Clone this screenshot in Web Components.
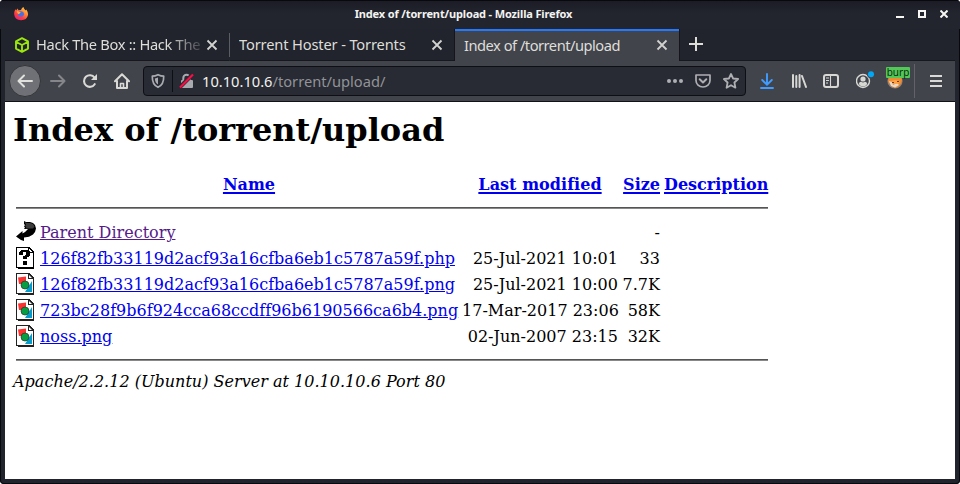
<!DOCTYPE html>
<html lang="en"><head><meta charset="utf-8"><title>Index of /torrent/upload</title>
<style>html,body{margin:0;width:960px;height:484px;overflow:hidden;background:#fff}</style></head>
<body><browser-window></browser-window>
<script>
const define=(name,html)=>customElements.define(name,class extends HTMLElement{
  constructor(){super();const t=document.createElement('template');t.innerHTML=html;this.attachShadow({mode:'open'}).append(t.content.cloneNode(true));}
});
const icons={
firefox:`<svg width="16" height="16" viewBox="0 0 16 16"><defs><linearGradient id="f" x1="1" y1="0" x2=".3" y2="1"><stop stop-color="#ffe04d"/><stop offset=".4" stop-color="#ff9136"/><stop offset=".75" stop-color="#ff3b47"/><stop offset="1" stop-color="#e22870"/></linearGradient></defs><path fill="url(#f)" d="M1.2 8.5C1 6.400 1.700 4.500 2.600 3.300L3.200 4.500L4.500 2.600L5.500 4.200L8 4C8.500 2.500 9.300 1.500 10.500 1C10.600 2.600 12 3.400 12.600 4.500L13.200 3.500C14.500 5 15.200 7 15 9A7 6.500 0 0 1 1.200 8.500Z"/><path fill="#4b6ee0" d="M5.300 6.200Q8 4 10.600 6.500Q11.800 9.500 9 10.800Q5.500 11.200 4.600 8.500L6.500 7.500Z"/><path fill="#ffb13b" d="M3.700 5L6 5.700L7.800 6.300L6.600 7.400L5.700 8.300Q4.200 7.500 3.700 5Z"/></svg>`,
box:`<svg width="16" height="16" viewBox="0 0 16 16" fill="none" stroke="#9be60b" stroke-width="1.9" stroke-linejoin="round"><path d="M8 1.200L14 4.400V11.600L8 14.900L2 11.600V4.400ZM2.300 5L8 8L13.700 5M8 8V14.500"/></svg>`,
close:`<svg width="12" height="12" viewBox="0 0 12 12"><path d="M1.500 1.500L10.500 10.500M10.500 1.500L1.500 10.500" stroke="#d2d2cf" stroke-width="1.8"/></svg>`,
plus:`<svg width="14" height="14" viewBox="0 0 14 14"><path d="M7 0V14M0 7H14" stroke="#deded9" stroke-width="2"/></svg>`,
back:`<svg width="16" height="16" viewBox="0 0 16 16" fill="none" stroke="#e0e0dc" stroke-width="2" stroke-linecap="round" stroke-linejoin="round"><path d="M15 8H1.500M7 2.500L1.500 8L7 13.500"/></svg>`,
forward:`<svg width="16" height="16" viewBox="0 0 16 16" fill="none" stroke="#85868a" stroke-width="2" stroke-linecap="round" stroke-linejoin="round"><path d="M1 8H14.500M9 2.500L14.500 8L9 13.500"/></svg>`,
reload:`<svg width="16" height="16" viewBox="0 0 16 16"><path d="M12.500 4.600A5.800 5.800 0 1 0 12.700 11.200" fill="none" stroke="#d9d9d5" stroke-width="2.100" stroke-linecap="round"/><path d="M15 1V7H9Z" fill="#d9d9d5"/></svg>`,
home:`<svg width="16" height="16" viewBox="0 0 16 16" fill="none" stroke="#d9d9d5" stroke-width="2" stroke-linejoin="round" stroke-linecap="round"><path d="M1 8.300L8 1.300L15 8.300M3 8V15H13V8"/><path d="M6.500 15V10.500H9.500V15" stroke-width="1.600"/></svg>`,
shield:`<svg width="14" height="16" viewBox="0 0 14 16"><path d="M7 1.700Q10 3.200 12.700 3.200Q13 11.500 7 14.300Q1 11.500 1.300 3.200Q4 3.200 7 1.700Z" fill="none" stroke="#aaabb0" stroke-width="1.700" stroke-linejoin="round"/><path d="M7 4.500V11.600Q4 9.600 3.900 5.400Q5.800 5.200 7 4.500Z" fill="#aaabb0"/></svg>`,
lock:`<svg width="16" height="16" viewBox="0 0 16 16"><path d="M4.300 7V5A3.200 3.200 0 0 1 10.700 5V8" fill="none" stroke="#a9aab0" stroke-width="2"/><rect x="2" y="7" width="12" height="8" rx="1" fill="#a9aab0"/><path d="M.5 14.500L13.500 1.500" stroke="#292a35" stroke-width="4"/><path d="M1 14.500L14 1.500" stroke="#ff0b43" stroke-width="2.100"/></svg>`,
dots:`<svg width="16" height="4" viewBox="0 0 16 4" fill="#aeafb3"><circle cx="2" cy="2" r="2"/><circle cx="8" cy="2" r="2"/><circle cx="14" cy="2" r="2"/></svg>`,
pocket:`<svg width="16" height="16" viewBox="0 0 16 16" fill="none" stroke="#aeafb3" stroke-linejoin="round" stroke-linecap="round"><path stroke-width="1.700" d="M1 2H15V7.500A7 6.500 0 0 1 1 7.500Z"/><path stroke-width="2" d="M4.700 6.300L8 9.500L11.300 6.300"/></svg>`,
star:`<svg width="16" height="16" viewBox="0 0 16 16"><path d="M8 1L10.100 5.500L15.100 6L11.400 9.500L12.400 14.700L8 12.200L3.600 14.700L4.600 9.500L.9 6L5.900 5.500Z" fill="none" stroke="#aeafb3" stroke-width="1.800" stroke-linejoin="round"/></svg>`,
download:`<svg width="14" height="16" viewBox="0 0 14 16" fill="none" stroke="#409cff" stroke-width="1.900" stroke-linecap="round"><path d="M7 1V11.500M2.200 7L7 11.700L11.800 7M1 15H13"/></svg>`,
library:`<svg width="16" height="16" viewBox="0 0 16 16" stroke="#d7d7d3" stroke-width="2" stroke-linecap="round"><path d="M2 2V14M5.300 3V14M8.600 2V14M11 3L15 14"/></svg>`,
sidebar:`<svg width="16" height="14" viewBox="0 0 16 14"><rect x="1" y="1" width="14" height="12" rx="2" fill="none" stroke="#d7d7d3" stroke-width="2"/><path d="M7.500 1V13M3 4H6M3 6.500H6M3 9H5" stroke="#d7d7d3" stroke-width="1.100"/></svg>`,
account:`<svg width="20" height="18" viewBox="0 0 20 18"><circle cx="7" cy="10" r="6.500" fill="none" stroke="#d7d7d3" stroke-width="1.400"/><circle cx="7" cy="8" r="2.600" fill="#d7d7d3"/><path d="M2.700 13Q3.300 10.800 5 10.800Q7 12.300 9 10.800Q10.700 10.800 11.300 13Q9.500 15.500 7 15.500Q4.500 15.500 2.700 13Z" fill="#d7d7d3"/><circle cx="15" cy="3.200" r="4" fill="#42444c"/><circle cx="15" cy="3.200" r="3" fill="#00a8f5"/></svg>`,
fox:`<svg width="16" height="16" viewBox="0 0 16 16"><circle cx="8" cy="8" r="7.600" fill="#9b8171"/><path d="M1 8Q2 2 8 2Q14 2 15 7Q14 13 8.500 15Q3 13 1 8Z" fill="#f08b30"/><path d="M2 8L5 9L6 12L10 10L12 12L8 14.500L4 13Z" fill="#e9d8c9"/><path d="M4 8L8 7L13 8L11 11L7 11Z" fill="#ffa348"/><path d="M5 9.500H7M10 8.500H12" stroke="#6b3a1b"/></svg>`,
menu:`<svg width="12" height="12" viewBox="0 0 12 12" stroke="#d9d9d5" stroke-width="2"><path d="M0 1H12M0 6H12M0 11H12"/></svg>`,
parent:`<svg width="20" height="22" viewBox="0 0 20 22"><path d="M8 0L10 1H14L17 2L19 4L20 7.500L19 11L17 13.500L13 15.800L8 16.500V20L5 19L0 15.500L6.500 10V12.500L9 11L12 8H8L9 6.500L8 5.500L9 4L8 3Z" fill="#000"/><path d="M8.500 1L11 2H14L17 3L18.500 5.500L17 7.500H9.500L10.500 6L9 5L10 3.500Z" fill="#3c3c3c"/></svg>`,
unknown:`<svg width="20" height="22" viewBox="0 0 20 22" shape-rendering="crispEdges"><path d="M0 0H13L18 5V22H2V21H0Z" fill="#000"/><path d="M1 1H12V6H17V20H1Z" fill="#fff"/><path d="M13 2L16 5H13Z" fill="#fff"/><path d="M4 4H5V3H12V4H14V9H13V10H11V12H7V9H9V8H10V5H7V8H3V5H4ZM7 14H11V18H7Z" fill="#000"/></svg>`,
image:`<svg width="20" height="22" viewBox="0 0 20 22"><path shape-rendering="crispEdges" d="M0 0H13L18 5V22H2V21H0Z" fill="#222"/><path shape-rendering="crispEdges" d="M1 1H12V6H17V20H1Z" fill="#fff"/><path d="M13 2L16 5H13Z" fill="#fff"/><path d="M2 4.500L10 3.500V11H3Z" fill="#ff3030"/><path d="M16 8V19H9Z" fill="#079bcc"/><circle cx="9" cy="12" r="4" fill="#079d42" stroke="#173c29" stroke-width=".7"/></svg>`};
customElements.define('ui-icon',class extends HTMLElement{connectedCallback(){if(!this.shadowRoot)this.attachShadow({mode:'open'}).innerHTML='<style>:host,svg{display:block;flex:none}</style>'+icons[this.getAttribute('name')];}});
define('window-title',`<style>:host{display:grid;grid-template-columns:100px 1fr 134px;align-items:center;height:29px;box-sizing:border-box;border-top:1px solid #08090d;background:linear-gradient(#1b1c25,#23252e 12px);color:#f3f3f1;font:bold 11px "Noto Sans",sans-serif;padding:0 12px 0 13px}.t{text-align:center;letter-spacing:-.14px;padding-bottom:3px}.w{display:flex;gap:14px;justify-content:flex-end;padding-bottom:3px}ui-icon{margin-top:-2px}</style><ui-icon name="firefox"></ui-icon><span class="t"><slot></slot></span><div class="w"><svg width="8" height="8"><path d="M0 7H8" stroke="#f6f6f3" stroke-width="2"/></svg><svg width="8" height="8"><path d="M1 1H7V7H1Z" fill="none" stroke="#f6f6f3" stroke-width="2"/></svg><svg width="8" height="8"><path d="M.5 .5L7.500 7.500M7.500 .5L.5 7.500" stroke="#f6f6f3" stroke-width="2"/></svg></div>`);
define('browser-tab',`<style>:host{display:flex;align-items:center;box-sizing:border-box;width:225px;height:32px;padding:0 11px 0 9px;color:#deded9;font:14.67px "Noto Sans",sans-serif;white-space:nowrap;border-bottom:1px solid #17181e}.t{flex:1;overflow:hidden;letter-spacing:var(--ls,0);padding-bottom:1px}:host([fade]) .t{-webkit-mask-image:linear-gradient(90deg,#000 80%,#0003 100%);margin-right:6px}:host([active]){background:#42444c;border-top:2px solid #2379ff;border-bottom:0;padding-bottom:2px}</style><slot name="icon"></slot><span class="t"><slot></slot></span><ui-icon name="close"></ui-icon>`);
define('tab-strip',`<style>:host{display:flex;height:32px;background:#22242d;margin:0 5px}.sep{box-sizing:border-box;width:1px;height:24px;margin-top:4px;background:#5b5d64}browser-tab{width:224px}.one{--ls:-.31px}.two{--ls:-.15px}.three{--ls:-.49px}.one ui-icon{margin-right:6px}.edge{width:1px;background:#15161d}.new{flex:1;border-bottom:1px solid #17181e;padding:8px 0 0 9px;box-sizing:border-box}</style><browser-tab class="one" fade><ui-icon slot="icon" name="box"></ui-icon>Hack The Box :: Hack The</browser-tab><div class="sep"></div><browser-tab class="two">Torrent Hoster - Torrents</browser-tab><div class="edge"></div><browser-tab active class="three">Index of /torrent/upload</browser-tab><div class="edge"></div><div class="new"><ui-icon name="plus"></ui-icon></div>`);
define('url-bar',`<style>:host{display:flex;align-items:center;box-sizing:border-box;width:603px;height:30px;border:1px solid #0e0f15;border-radius:4px;background:#282a34;padding:0 6px 0 7px;color:#f2f2ee;font:14.67px "Noto Sans",sans-serif}.sep{height:22px;width:1px;background:#0e0f15;margin:0 6px 0 7px}.url{flex:1;margin-left:7px}.url i{font-style:normal;color:#929397}.end{display:flex;align-items:center;gap:12px}</style><ui-icon name="shield"></ui-icon><div class="sep"></div><ui-icon name="lock"></ui-icon><span class="url">10.10.10.6<i>/torrent/upload/</i></span><div class="end"><ui-icon name="dots"></ui-icon><ui-icon name="pocket"></ui-icon><ui-icon name="star"></ui-icon></div>`);
define('tool-bar',`<style>:host{display:flex;align-items:center;box-sizing:border-box;margin:0 5px;height:41px;background:#42444c;border-bottom:1px solid #101116;padding-left:4px}.back{display:grid;place-items:center;box-sizing:border-box;width:32px;height:32px;border:1px solid #343538;border-radius:50%;background:#707177;margin-right:9px}.r{margin:0 16px 0 16px}url-bar{margin-left:13px}.tools{display:flex;align-items:center;margin-left:14px}.burp{position:relative;margin-left:11px}.burp b{position:absolute;left:-1px;top:-6px;width:24px;height:11px;font:10px/10px "Noto Sans",sans-serif;text-align:center;color:#102b12;background:#52c957;border-radius:1px}.line{width:1px;height:34px;background:#626369;margin:0 15px 0 11px}</style><div class="back"><ui-icon name="back"></ui-icon></div><ui-icon name="forward"></ui-icon><ui-icon class="r" name="reload"></ui-icon><ui-icon name="home"></ui-icon><url-bar></url-bar><div class="tools"><ui-icon name="download"></ui-icon><ui-icon name="library" style="margin-left:17px"></ui-icon><ui-icon name="sidebar" style="margin-left:16px"></ui-icon><ui-icon name="account" style="margin:-2px 0 0 17px"></ui-icon><div class="burp"><ui-icon name="fox"></ui-icon><b>burp</b></div><div class="line"></div><ui-icon name="menu"></ui-icon></div>`);
const grid=`grid-template-columns:20px 418px 156px 38px 104px;column-gap:4px;`;
customElements.define('file-row',class extends HTMLElement{connectedCallback(){const a=n=>this.getAttribute(n)||'';this.attachShadow({mode:'open'}).innerHTML=`<style>:host{display:grid;${grid}height:26px;line-height:20px;align-items:center;white-space:nowrap;letter-spacing:.01px}.r{text-align:right}ui-icon{margin-top:-2px}a{color:#0000ee;text-decoration:underline}:host([visited]) a{color:#551a8b}</style><ui-icon name="${a('icon')}"></ui-icon><span><a>${a('name')}</a></span><span class="r">${a('date')}</span><span class="r">${a('size')}</span>`;}});
define('directory-page',`<style>:host{display:block;height:377px;box-sizing:border-box;margin:0 5px;padding:9px 8px 8px;background:#fff;color:#000;font:16px "DejaVu Serif",serif}h1{font-size:32px;line-height:38px;margin:0 0 26px}.listing{width:752px;margin-left:3px}.head{display:grid;${grid}height:20px;line-height:20px;font-weight:bold;text-align:center;color:#00e;white-space:nowrap}.head span{text-decoration:underline 2px;text-underline-offset:2px}.head span:nth-child(3){letter-spacing:.04px}.head span:nth-child(4){text-align:right}.rule{height:2px;box-sizing:border-box;border-top:1px solid #555;background:#888}.top{margin:12px 0 11px}.bottom{margin:9px 0 11px}address{line-height:19px;font-style:italic;letter-spacing:.02px}</style><h1>Index of /torrent/upload</h1><div class="listing"><div class="head"><span></span><span>Name</span><span>Last modified</span><span>Size</span><span>Description</span></div><div class="rule top"></div><file-row visited icon="parent" name="Parent Directory" size="-"></file-row><file-row icon="unknown" name="126f82fb33119d2acf93a16cfba6eb1c5787a59f.php" date="25-Jul-2021 10:01" size="33"></file-row><file-row icon="image" name="126f82fb33119d2acf93a16cfba6eb1c5787a59f.png" date="25-Jul-2021 10:00" size="7.7K"></file-row><file-row icon="image" name="723bc28f9b6f924cca68ccdff96b6190566ca6b4.png" date="17-Mar-2017 23:06" size="58K"></file-row><file-row icon="image" name="noss.png" date="02-Jun-2007 23:15" size="32K"></file-row><div class="rule bottom"></div></div><address>Apache/2.2.12 (Ubuntu) Server at 10.10.10.6 Port 80</address>`);
define('browser-window',`<style>:host{display:block;width:960px;height:484px;box-sizing:border-box;background:#22242d;border-radius:4px;box-shadow:inset 0 0 0 1px #08090d;overflow:hidden}</style><window-title>Index of /torrent/upload - Mozilla Firefox</window-title><tab-strip></tab-strip><tool-bar></tool-bar><directory-page></directory-page>`);
</script></body></html>
